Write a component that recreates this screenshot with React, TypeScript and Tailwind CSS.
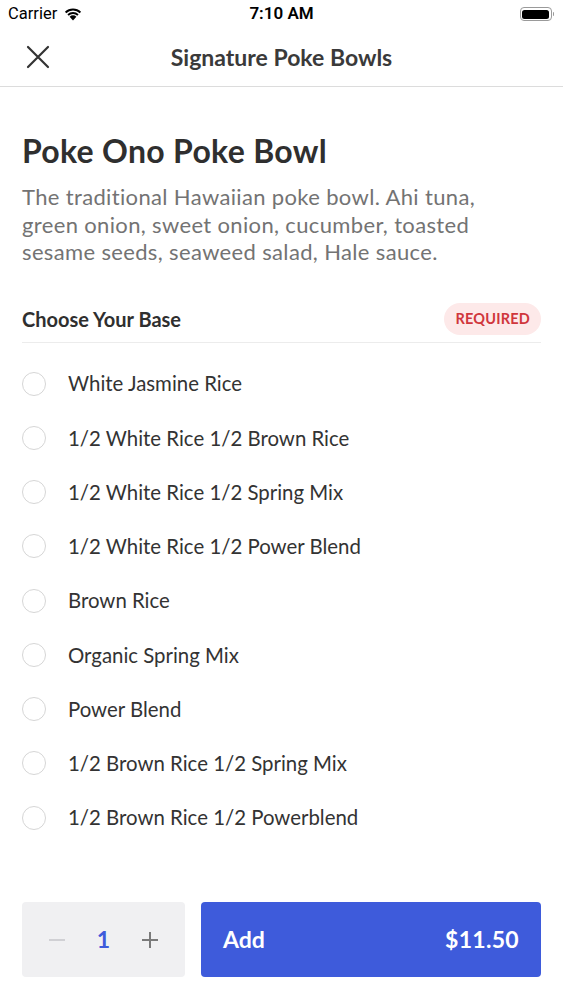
import React, { useState } from "react"

const bases = [
  "White Jasmine Rice",
  "1/2 White Rice 1/2 Brown Rice",
  "1/2 White Rice 1/2 Spring Mix",
  "1/2 White Rice 1/2 Power Blend",
  "Brown Rice",
  "Organic Spring Mix",
  "Power Blend",
  "1/2 Brown Rice 1/2 Spring Mix",
  "1/2 Brown Rice 1/2 Powerblend",
]

function StatusBar() {
  return (
    <div className="relative flex h-[28px] items-center justify-between px-[8px] text-black">
      <div className="flex items-center gap-[6px] text-[16.5px]" style={{ fontFamily: "Roboto, sans-serif" }}>
        <span>Carrier</span>
        <svg width="20" height="14" viewBox="0 0 17 12" fill="black">
          <path d="M8.5 11.5 L5.6 8.3 A4.2 4.2 0 0 1 11.4 8.3 Z" />
          <path d="M3.7 6.3 A6.9 6.9 0 0 1 13.3 6.3 L12.2 7.5 A5.3 5.3 0 0 0 4.8 7.5 Z" />
          <path d="M1.6 4.1 A9.9 9.9 0 0 1 15.4 4.1 L14.3 5.3 A8.3 8.3 0 0 0 2.7 5.3 Z" />
        </svg>
      </div>
      <span
        className="absolute left-1/2 -translate-x-1/2 text-[17px] font-semibold"
        style={{ fontFamily: "Roboto, sans-serif" }}
      >
        7:10 AM
      </span>
      <div className="flex items-center pr-[1px]">
        <div className="flex h-[14px] w-[32px] items-center rounded-[4px] border border-[#9a9a9a] p-[1.5px]">
          <div className="h-full w-full rounded-[2.5px] bg-black" />
        </div>
        <div className="ml-[1px] h-[4px] w-[1.5px] rounded-r-sm bg-[#9a9a9a]" />
      </div>
    </div>
  )
}

export default function App() {
  const [qty, setQty] = useState(1)
  const [selected, setSelected] = useState<number | null>(null)

  return (
    <div
      className="flex h-[1000px] w-[563px] flex-col overflow-hidden bg-white text-[#333]"
      style={{ fontFamily: "Lato, 'Open Sans', sans-serif" }}
    >
      <StatusBar />

      {/* nav bar */}
      <div className="relative flex h-[59px] items-center border-b border-[#dcdcdc] px-[26px]">
        <svg width="24" height="24" viewBox="0 0 24 24" stroke="#333" strokeWidth="2.2" strokeLinecap="round">
          <path d="M2 2 L22 22 M22 2 L2 22" />
        </svg>
        <span className="absolute left-1/2 -translate-x-1/2 whitespace-nowrap text-[23px] font-bold text-[#3a3a3a]">
          Signature Poke Bowls
        </span>
      </div>

      <div className="px-[22px]">
        <h1 className="mt-[42px] text-[32px] font-bold leading-[44px] tracking-[0.3px] text-[#2f2f2f]">
          Poke Ono Poke Bowl
        </h1>
        <p className="mt-[10px] max-w-[495px] text-[22px] leading-[27.5px] tracking-[0.35px] text-[#737373]">
          The traditional Hawaiian poke bowl. Ahi tuna, green onion, sweet onion, cucumber, toasted sesame seeds,
          seaweed salad, Hale sauce.
        </p>

        <div className="mt-[37px] flex items-center justify-between border-b border-[#ececec] pb-[7px]">
          <span className="text-[20px] font-bold text-[#2f2f2f]">Choose Your Base</span>
          <span className="flex h-[32px] items-center rounded-full bg-[#fde9e9] px-[11px] text-[14.5px] font-bold tracking-[0.2px] text-[#d0363c]">
            REQUIRED
          </span>
        </div>

        <div className="mt-[14px] flex flex-col">
          {bases.map((b, i) => (
            <button
              key={b}
              onClick={() => setSelected(i)}
              className="flex h-[54.25px] items-center gap-[22px] text-left"
            >
              <span className="flex h-[24px] w-[24px] items-center justify-center rounded-full border border-[#d6d6d6]">
                {selected === i && <span className="h-[12px] w-[12px] rounded-full bg-[#3e5bdb]" />}
              </span>
              <span className="text-[20.4px] text-[#333]">{b}</span>
            </button>
          ))}
        </div>
      </div>

      <div className="flex-1" />

      <div className="flex gap-[16px] px-[22px] pb-[23px]">
        <div className="flex h-[75px] w-[163px] items-center justify-between rounded-[4px] bg-[#f0f0f2] px-[26px]">
          <button onClick={() => setQty((q) => Math.max(1, q - 1))} className="text-[#d0d0d4]">
            <svg width="18" height="18" viewBox="0 0 18 18" stroke="currentColor" strokeWidth="2">
              <path d="M1 9 H17" />
            </svg>
          </button>
          <span className="text-[23px] font-bold text-[#3e5bdb]">{qty}</span>
          <button onClick={() => setQty((q) => q + 1)} className="text-[#7a7a7a]">
            <svg width="18" height="18" viewBox="0 0 18 18" stroke="currentColor" strokeWidth="2">
              <path d="M1 9 H17 M9 1 V17" />
            </svg>
          </button>
        </div>
        <button className="flex h-[75px] flex-1 items-center justify-between rounded-[4px] bg-[#3e5bdb] px-[22px] text-[23px] font-bold text-white">
          <span>Add</span>
          <span className="tracking-[0.3px]">${(11.5 * qty).toFixed(2)}</span>
        </button>
      </div>
    </div>
  )
}
